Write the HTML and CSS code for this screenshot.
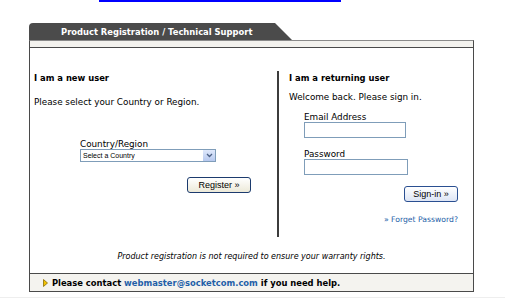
FILE: index.html
```html
<!DOCTYPE html>
<html lang="en">
<head>
    <meta charset="UTF-8">
    <title>Product Registration / Technical Support</title>
    <link rel="stylesheet" href="styles.css">
</head>
<body>
<div class="top-link"></div>

<div class="panel">
    <div class="tab">Product Registration / Technical Support</div>
    <div class="box">
        <div class="band"></div>

        <div class="cols">
            <div class="col col-new">
                <h3>I am a new user</h3>
                <p class="lead">Please select your Country or Region.</p>
                <div class="country">
                    <label>Country/Region</label>
                    <div class="select">
                        <span>Select a Country</span>
                        <span class="arrow">
                            <svg width="7" height="5" viewBox="0 0 7 5"><path d="M1 1 L3.5 3.5 L6 1" fill="none" stroke="#4d6185" stroke-width="1.3"/></svg>
                        </span>
                    </div>
                </div>
                <div class="btn-row">
                    <button class="btn register">Register &raquo;</button>
                </div>
            </div>

            <div class="col col-return">
                <h3>I am a returning user</h3>
                <p class="lead">Welcome back. Please sign in.</p>
                <div class="fields">
                    <label>Email Address</label>
                    <input type="text" class="field">
                    <label class="pw-label">Password</label>
                    <input type="password" class="field field-pw">
                </div>
                <div class="btn-row">
                    <button class="btn signin">Sign-in &raquo;</button>
                </div>
                <div class="forgot"><a href="#">&raquo; Forget Password?</a></div>
            </div>
        </div>

        <p class="note">Product registration is not required to ensure your warranty rights.</p>

        <div class="help">
            <svg class="arrow-icon" width="5" height="8" viewBox="0 0 5 8"><path d="M0.5 0.5 L4.5 4 L0.5 7.5 Z" fill="#f2c200" stroke="#8a6d00" stroke-width="0.8"/></svg>
            Please contact <a href="#">webmaster@socketcom.com</a> if you need help.
        </div>
    </div>
</div>

<div class="bottom-strip"></div>
</body>
</html>
```

FILE: styles.css
```css
body {
    margin: 0;
    background: #fff;
    font-family: "DejaVu Sans", Verdana, sans-serif;
    color: #000;
}
.top-link {
    margin-left: 99px;
    width: 242px;
    height: 2px;
    background-color: #0000ff;
}
.panel {
    margin: 21px 0 0 29px;
    width: 445px;
}
.tab {
    width: 263px;
    height: 17px;
    line-height: 18px;
    padding-left: 32px;
    box-sizing: border-box;
    background-color: #4b4b4b;
    color: #fff;
    font-size: 8.4px;
    font-weight: bold;
    border-top-left-radius: 4px;
    clip-path: polygon(0 0, 246px 0, 263px 100%, 0 100%);
}
.box {
    border: 1px solid #4a4a4a;
    border-top: 1px solid #8a8a8a;
}
.band {
    height: 6px;
    background-color: #f3f2ee;
    border-bottom: 1px solid #4a4a4a;
}
.cols {
    display: grid;
    grid-template-columns: 247px 1fr;
    padding-top: 24px;
}
.col h3 {
    margin: 0;
    font-size: 8.4px;
    line-height: 10px;
    font-weight: bold;
}
.lead {
    font-size: 8.8px;
    line-height: 10px;
    margin: 0;
}
.col-new {
    padding-left: 4px;
    padding-top: 1px;
}
.col-new .lead {
    margin-top: 14px;
}
.country {
    margin: 32px 0 0 46px;
}
.country label {
    display: block;
    font-size: 8.8px;
    line-height: 10px;
}
.select {
    width: 136px;
    height: 13px;
    box-sizing: border-box;
    border: 1px solid #7f9db9;
    display: flex;
    align-items: center;
    justify-content: space-between;
    font-family: "Liberation Sans", Arial, sans-serif;
    font-size: 7px;
    padding-left: 2px;
    margin-top: 0;
}
.arrow {
    width: 12px;
    height: 11px;
    background: linear-gradient(#dfe8fb, #b7c9ef);
    display: flex;
    align-items: center;
    justify-content: center;
}
.btn-row {
    display: flex;
    justify-content: flex-end;
}
.btn {
    font-family: "Liberation Sans", Arial, sans-serif;
    font-size: 9px;
    height: 16px;
    padding: 0 6px;
    background: linear-gradient(#ffffff, #ece9d8);
    border: 1px solid #1c3b6e;
    border-radius: 3px;
    color: #000;
}
.register {
    width: 64px;
    margin: 15px 26px 0 0;
}
.col-return {
    border-left: 2px solid #3c3c3c;
    padding: 2px 0 0 10px;
    height: 166px;
    box-sizing: border-box;
    margin-top: -1px;
}
.col-return .lead {
    margin-top: 9px;
}
.fields {
    margin-left: 15px;
    margin-top: 11px;
    display: flex;
    flex-direction: column;
    align-items: flex-start;
}
.fields label {
    font-size: 8.8px;
    line-height: 9px;
}
.field {
    width: 102px;
    height: 16px;
    box-sizing: border-box;
    border: 1px solid #7f9db9;
    margin: 0;
}
.pw-label {
    margin-top: 12px;
}
.field-pw {
    width: 104px;
}
.col-return .btn-row {
    margin-right: 15px;
}
.signin {
    width: 54px;
    margin-top: 11px;
    border-color: #2a4f91;
    background: linear-gradient(#ffffff, #dde5f5);
}
.forgot {
    text-align: right;
    margin: 13px 15px 0 0;
    font-size: 7.7px;
    line-height: 10px;
}
.forgot a {
    color: #1f5fa8;
    text-decoration: none;
}
.note {
    margin: 15px 0 0;
    text-align: center;
    font-style: italic;
    font-size: 8px;
    line-height: 10px;
    padding-bottom: 11px;
}
.help {
    height: 17px;
    line-height: 18px;
    border-top: 1px solid #4a4a4a;
    background-color: #f4f3ef;
    padding-left: 13px;
    font-size: 8.4px;
    font-weight: bold;
}
.arrow-icon {
    vertical-align: -1px;
    margin-right: 1px;
}
.help a {
    color: #1f5fa8;
    text-decoration: none;
}
.bottom-strip {
    margin-top: 5px;
    height: 3px;
    background-color: #eeeeee;
}
```
